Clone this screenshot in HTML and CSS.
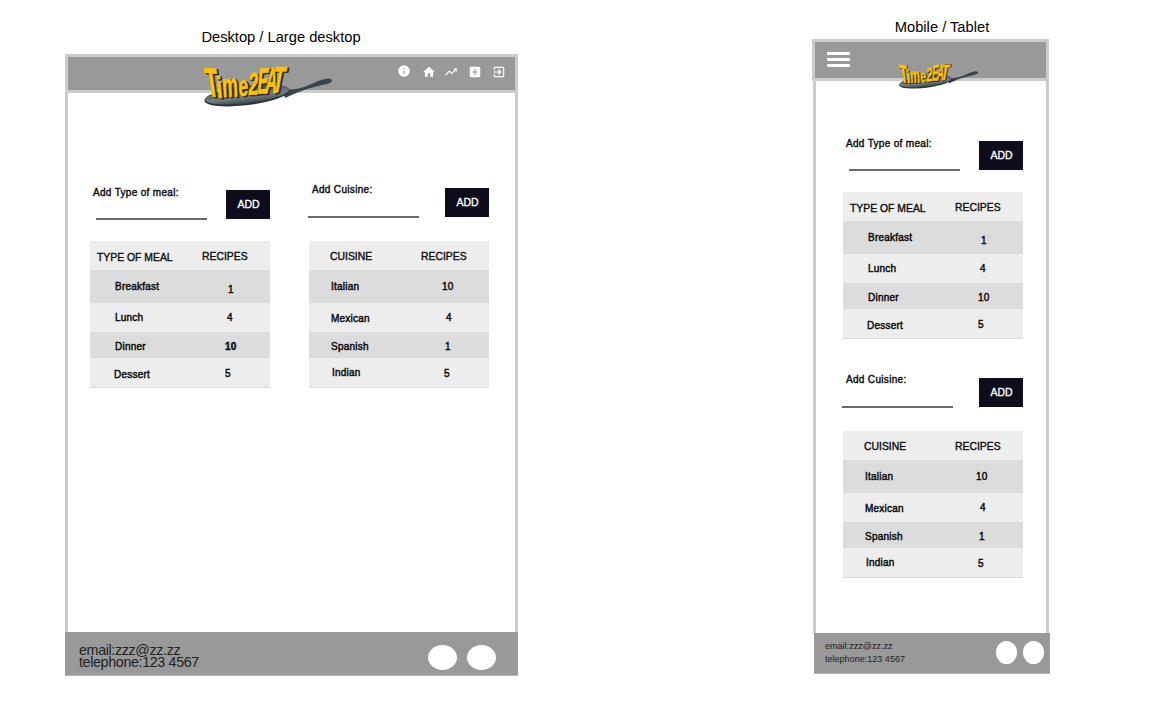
FILE: index.html
```html
<!DOCTYPE html>
<html lang="en">
<head>
<meta charset="utf-8">
<title>Time2EAT – types and cuisines</title>
<link rel="stylesheet" href="styles.css">
</head>
<body>
<svg class="defs" width="0" height="0">
  <defs>
    <linearGradient id="pan" x1="0" y1="0" x2="0" y2="1">
      <stop offset="0" stop-color="#465157"/><stop offset=".65" stop-color="#737d83"/><stop offset="1" stop-color="#3a464b"/>
    </linearGradient>
    <g id="word">
      <text transform="matrix(1.1 .1 .3 2.15 4.6 31)">T</text>
      <text transform="matrix(1.15 0 .15 1.6 14.3 32.5)">i</text>
      <text transform="matrix(.92 -.03 .08 1.75 19.8 32)">m</text>
      <text transform="matrix(.92 -.05 0 1.5 35.6 31)">e</text>
      <text transform="matrix(.95 -.06 -.08 1.65 45 30)">2</text>
      <text transform="matrix(.85 -.04 -.18 1.9 53.8 28.8)">E</text>
      <text transform="matrix(.85 0 -.22 1.9 61.5 28)">A</text>
      <text transform="matrix(1.02 0 -.37 1.9 67.8 27.2)">T</text>
    </g>
    <symbol id="logo" viewBox="0 0 130 42">
      <path fill="#34464b" d="M80 24 Q92 26 105 20.5 L115 16 Q127 11.5 129 15 Q129.500 18.500 119 20 L104 24 Q92 28 82 33Z"/>
      <ellipse cx="44" cy="30.5" rx="43" ry="9.6" transform="rotate(-7 44 30.5)" fill="#283337"/>
      <ellipse cx="44" cy="29.6" rx="42.3" ry="8.6" transform="rotate(-7 44 29.6)" fill="url(#pan)"/>
      <use href="#word" x="1.6" y="1" class="word-shadow"/>
      <use href="#word" class="word-face"/>
    </symbol>
  </defs>
</svg>
<main class="board">
  <section class="view desktop">
    <h1 class="caption">Desktop / Large desktop</h1>
    <div class="frame">
      <header class="bar">
        <svg class="logo"><use href="#logo"/></svg>
        <nav class="nav">
          <svg class="ic info" viewBox="0 0 24 24"><path d="M12 2a10 10 0 1 0 0 20 10 10 0 0 0 0-20zm1 15h-2v-6h2v6zm0-8h-2V7h2v2z"/></svg>
          <svg class="ic home" viewBox="0 0 24 24"><path d="M10 20v-6h4v6h5v-8h3L12 3 2 12h3v8z"/></svg>
          <svg class="ic trend" viewBox="0 0 24 24"><path d="M16 6l2.29 2.29-4.88 4.88-4-4L2 16.59 3.41 18l6-6 4 4 6.3-6.29L22 12V6z"/></svg>
          <svg class="ic plus" viewBox="0 0 24 24"><path d="M19 3H5a2 2 0 0 0-2 2v14a2 2 0 0 0 2 2h14a2 2 0 0 0 2-2V5a2 2 0 0 0-2-2zm-2 10h-4v4h-2v-4H7v-2h4V7h2v4h4v2z"/></svg>
          <svg class="ic exit" viewBox="0 0 24 24"><path d="M10.09 15.59L11.5 17l5-5-5-5-1.41 1.41L12.67 11H3v2h9.67l-2.58 2.59zM19 3H5a2 2 0 0 0-2 2v4h2V5h14v14H5v-4H3v4a2 2 0 0 0 2 2h14a2 2 0 0 0 2-2V5a2 2 0 0 0-2-2z"/></svg>
        </nav>
      </header>
      <div class="content">
        <section class="group meal">
          <div class="form"><div class="field"><label>Add Type of meal:</label><span class="line"></span></div><button class="add">ADD</button></div>
          <div class="table">
            <div class="row head"><span class="name">TYPE OF MEAL</span><span class="count">RECIPES</span></div>
            <div class="row r1"><span class="name">Breakfast</span><span class="count">1</span></div>
            <div class="row r2"><span class="name">Lunch</span><span class="count">4</span></div>
            <div class="row r3"><span class="name">Dinner</span><span class="count strong">10</span></div>
            <div class="row r4"><span class="name">Dessert</span><span class="count">5</span></div>
          </div>
        </section>
        <section class="group cuisine">
          <div class="form"><div class="field"><label>Add Cuisine:</label><span class="line"></span></div><button class="add">ADD</button></div>
          <div class="table">
            <div class="row head"><span class="name">CUISINE</span><span class="count">RECIPES</span></div>
            <div class="row r1"><span class="name">Italian</span><span class="count">10</span></div>
            <div class="row r2"><span class="name">Mexican</span><span class="count">4</span></div>
            <div class="row r3"><span class="name">Spanish</span><span class="count">1</span></div>
            <div class="row r4"><span class="name">Indian</span><span class="count">5</span></div>
          </div>
        </section>
      </div>
      <footer class="foot">
        <address class="contact"><span>email:zzz@zz.zz</span><span>telephone:123 4567</span></address>
        <div class="dots"><i></i><i></i></div>
      </footer>
    </div>
  </section>
  <section class="view mobile">
    <h1 class="caption">Mobile / Tablet</h1>
    <div class="frame">
      <header class="bar">
        <div class="burger"><i></i><i></i><i></i></div>
        <svg class="logo"><use href="#logo"/></svg>
      </header>
      <div class="content">
        <section class="group meal">
          <div class="form"><div class="field"><label>Add Type of meal:</label><span class="line"></span></div><button class="add">ADD</button></div>
          <div class="table">
            <div class="row head"><span class="name">TYPE OF MEAL</span><span class="count">RECIPES</span></div>
            <div class="row r1"><span class="name">Breakfast</span><span class="count">1</span></div>
            <div class="row r2"><span class="name">Lunch</span><span class="count">4</span></div>
            <div class="row r3"><span class="name">Dinner</span><span class="count">10</span></div>
            <div class="row r4"><span class="name">Dessert</span><span class="count">5</span></div>
          </div>
        </section>
        <section class="group cuisine">
          <div class="form"><div class="field"><label>Add Cuisine:</label><span class="line"></span></div><button class="add">ADD</button></div>
          <div class="table">
            <div class="row head"><span class="name">CUISINE</span><span class="count">RECIPES</span></div>
            <div class="row r1"><span class="name">Italian</span><span class="count">10</span></div>
            <div class="row r2"><span class="name">Mexican</span><span class="count">4</span></div>
            <div class="row r3"><span class="name">Spanish</span><span class="count">1</span></div>
            <div class="row r4"><span class="name">Indian</span><span class="count">5</span></div>
          </div>
        </section>
      </div>
      <footer class="foot">
        <address class="contact"><span>email:zzz@zz.zz</span><span>telephone:123 4567</span></address>
        <div class="dots"><i></i><i></i></div>
      </footer>
    </div>
  </section>
</main>
</body>
</html>
```

FILE: styles.css
```css
* { box-sizing: border-box; }
body { margin: 0; background: #fff; color: #0b0b0b; font-family: "Liberation Sans", Arial, sans-serif; overflow: hidden; }
.defs { position: absolute; }
.board { display: flex; justify-content: space-between; width: 1155px; height: 702px; padding: 0 105px 0 65px; }
.view { display: flex; flex-direction: column; }
.caption { margin: 0; font-size: 14.7px; line-height: 18px; font-weight: 400; text-align: center; white-space: nowrap; color: #000; }
.frame { display: flex; flex-direction: column; }
.desktop { width: 453px; padding-top: 28px; }
.desktop .caption { padding-right: 21px; margin-bottom: 8px; }
.desktop .frame { height: 622px; }
.mobile { width: 238px; padding-top: 18px; }
.mobile .caption { padding-left: 22px; margin-bottom: 3px; }
.mobile .frame { height: 635px; }

.bar { position: relative; display: flex; background: #999; border: 3px solid #ccc; flex: none; }
.desktop .bar { height: 39px; }
.mobile .bar { height: 42px; width: 237px; }
.logo { position: absolute; }
.desktop .logo { left: 135px; top: 8px; width: 130px; height: 42px; }
.mobile .logo { left: 83px; top: 21px; width: 81px; height: 26px; }
.word-face { fill: #fcc00f; stroke: #fcc00f; stroke-width: .4; font: bold 19px "Liberation Sans", Arial, sans-serif; }
.word-shadow { fill: #2a2818; stroke: #2a2818; stroke-width: .7; font: bold 19px "Liberation Sans", Arial, sans-serif; }

.nav { display: flex; margin-left: auto; padding: 7px 9px 0 0; }
.ic { width: 14px; height: 14px; fill: #fff; }
.home { margin: 1px 0 0 11px; }
.trend { margin: 1px 0 0 8px; }
.plus { margin: 1px 0 0 10px; }
.exit { margin: 1px 0 0 10px; }
.burger { display: flex; flex-direction: column; gap: 3px; padding: 10px 0 0 12px; }
.burger i { width: 23px; height: 3px; background: #fff; border-radius: 1px; }

.content { flex: 1; display: flex; }
.desktop .content { border: solid #ccc; border-width: 0 3px; padding: 94px 0 0 22px; gap: 39px; }
.mobile .content { flex-direction: column; width: 236px; margin-left: 1px; border: solid #ccc; border-width: 0 3px; padding: 57px 0 0 27px; }
.group { width: 180px; }

.form { display: flex; justify-content: space-between; align-items: flex-start; height: 54px; }
.field { display: flex; flex-direction: column; justify-content: space-between; }
.field label { font-size: 10px; line-height: 12px; letter-spacing: .32px; -webkit-text-stroke: .4px #0b0b0b; white-space: nowrap; }
.line { width: 111px; height: 2px; background: #6a6970; }
.add { width: 44px; height: 29px; padding: 0 0 0 1px; border: 0; background: #0f0c1c; color: #fff; font: 10.5px/29px "Liberation Sans", Arial, sans-serif; -webkit-text-stroke: .3px #fff; text-align: center; }
.meal .field { height: 33px; padding-left: 3px; }
.meal .line { margin-left: 3px; }
.meal .add { margin-top: 3px; }
.cuisine .form { height: 57px; }
.cuisine .field { height: 34px; margin-left: -1px; }
.cuisine label { padding-left: 4px; }
.cuisine .add { margin-top: 4px; }
.desktop .cuisine { margin-top: -3px; }
.mobile .cuisine { margin-top: 35px; }

.table { display: flex; flex-direction: column; background: #ededed; border-bottom: 1px solid #dadada; }
.row { display: grid; grid-template-columns: 112px 68px; font-size: 10px; letter-spacing: .22px; -webkit-text-stroke: .45px #0b0b0b; white-space: nowrap; }
.head { height: 29px; line-height: 31px; font-size: 10.4px; letter-spacing: 0; -webkit-text-stroke-width: .35px; }
.r1 { height: 33px; line-height: 33px; background: #dcdcdc; }
.r2 { height: 29px; line-height: 29px; }
.r3 { height: 26px; line-height: 29px; background: #dcdcdc; }
.r4 { height: 29px; line-height: 29px; }
.strong { font-weight: 700; }
.meal .name { padding-left: 25px; }
.meal .head .name { padding: 1px 0 0 7px; }
.meal .r4 .name { padding: 2px 0 0 24px; }
.meal .r1 .count { padding: 3px 0 0 26px; }
.meal .r2 .count { padding-left: 25px; }
.meal .r3 .count { padding-left: 23px; }
.meal .r4 .count { padding: 1px 0 0 23px; }
.cuisine .name { padding-left: 22px; }
.cuisine .head .name { padding-left: 21px; }
.cuisine .r2 .name { padding-top: 1px; }
.cuisine .r4 .name { padding: 0 0 0 23px; }
.cuisine .r1 .count { padding-left: 21px; }
.cuisine .r2 .count { padding-left: 25px; }
.cuisine .r3 .count { padding-left: 24px; }
.cuisine .r4 .count { padding: 1px 0 0 23px; }

.foot { display: flex; justify-content: space-between; flex: none; background: #999; }
.desktop .foot { height: 44px; padding: 12px 22px 0 14px; border-bottom: 1px solid #b5b5b5; }
.mobile .foot { height: 41px; width: 236px; margin-left: 2px; padding: 7px 6px 0 11px; border-bottom: 1px solid #b5b5b5; }
.contact { display: flex; flex-direction: column; font-style: normal; color: #222; white-space: nowrap; }
.desktop .contact { font-size: 14.3px; line-height: 12px; letter-spacing: -.36px; }
.mobile .contact { font-size: 9.05px; line-height: 13px; }
.dots { display: flex; }
.dots i { background: #fff; border-radius: 50%; }
.desktop .dots { gap: 10px; padding-top: 1px; }
.desktop .dots i { width: 29px; height: 25px; }
.mobile .dots { gap: 6px; padding-top: 1px; }
.mobile .dots i { width: 21px; height: 23px; }
```
